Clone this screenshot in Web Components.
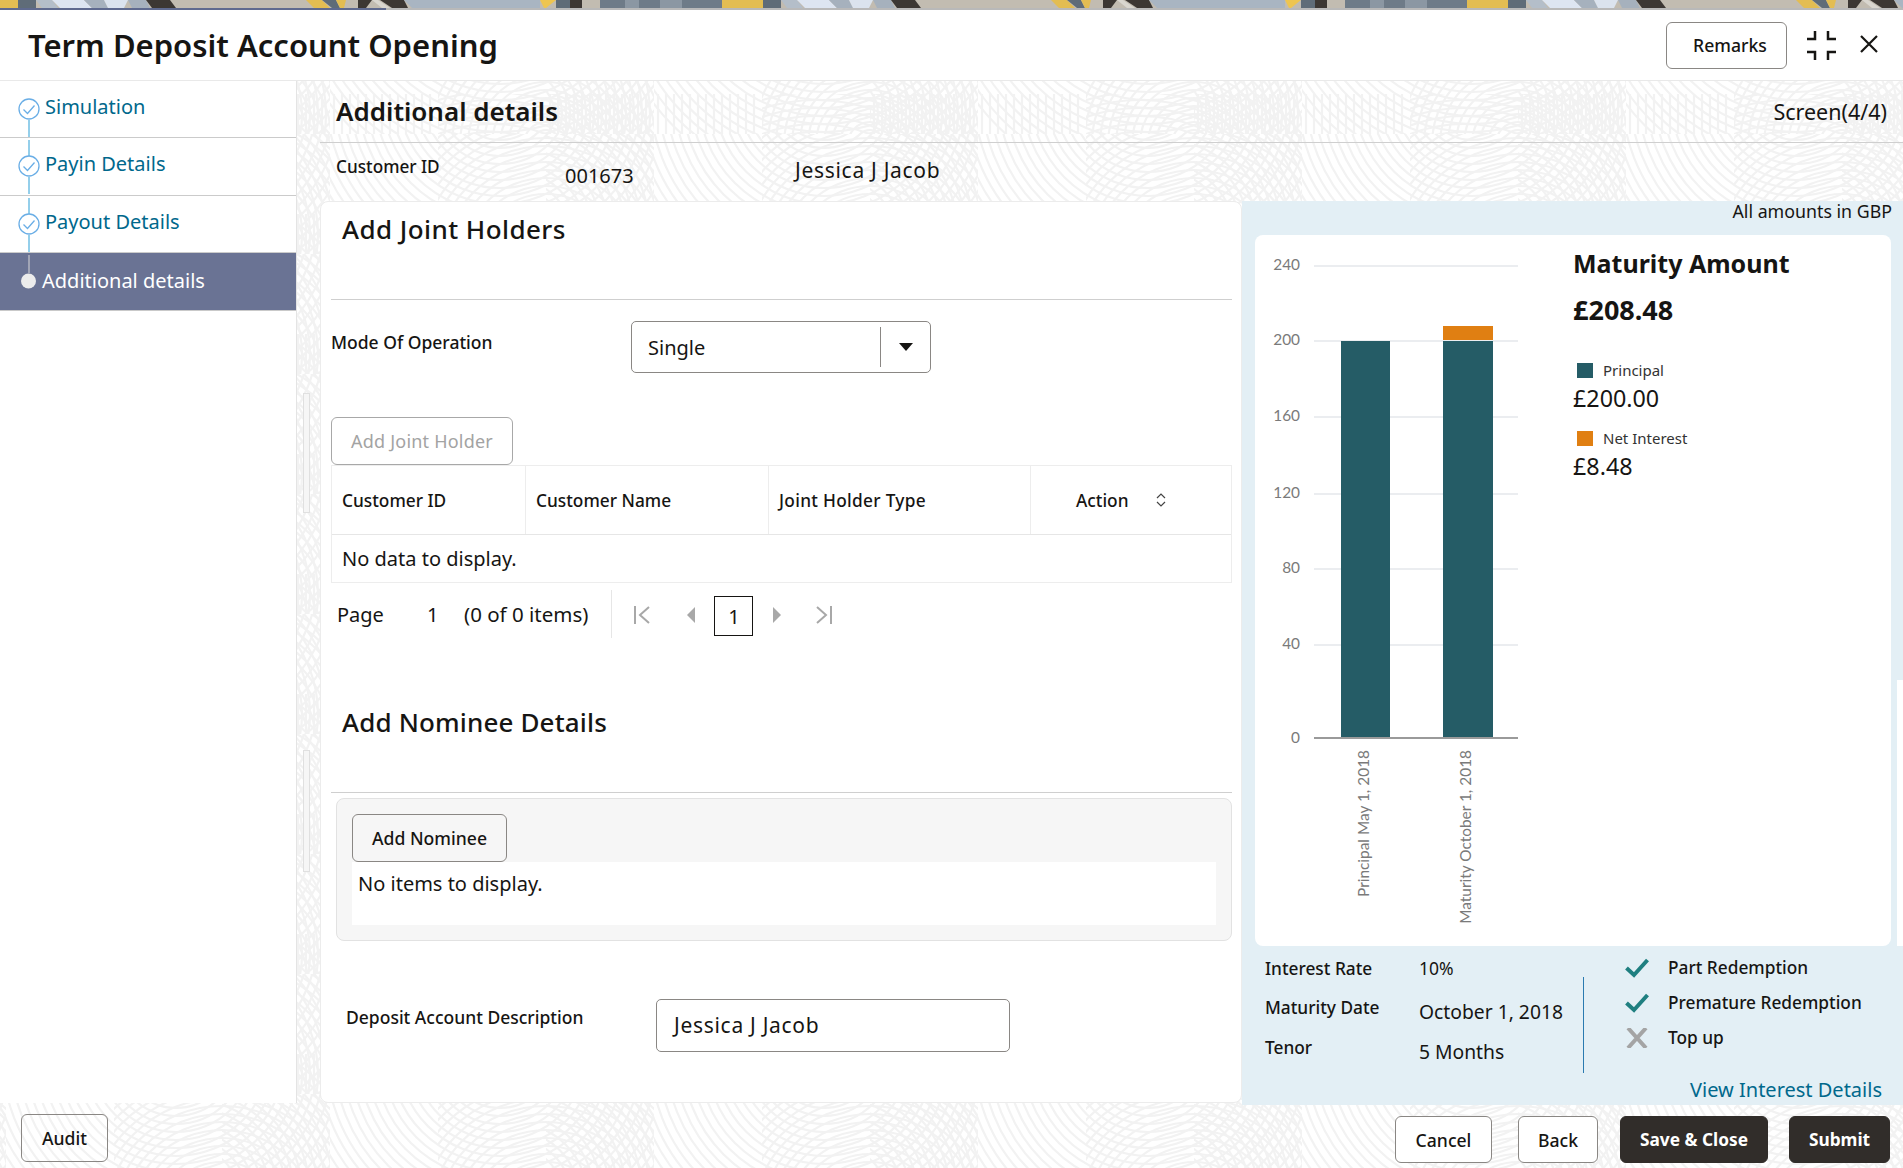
<!DOCTYPE html>
<html lang="en">
<head>
<meta charset="utf-8">
<title>Term Deposit Account Opening</title>
<style>
	html, body { margin: 0; padding: 0; background: #fff; }
	body { font-family: "Noto Sans", "Open Sans", sans-serif; color: #161513; }
</style>
</head>
<body>
<td-app></td-app>
<script>
(function() {
	function tpl(html) {
		let t = document.createElement("template");
		t.innerHTML = html;
		return t;
	}

	class Base extends HTMLElement {
		constructor(template) {
			super();
			this._shadowRoot = this.attachShadow({mode: "open"});
			this._shadowRoot.appendChild(template.content.cloneNode(true));
		}
	}

	// top image strip, drawn as skewed slabs
	const bannerTemplate = tpl(`
		<style>
		:host { display: block; height: 8px; overflow: hidden; background: #bdb7ac; }
		svg { display: block; }
		</style>
		<svg width="1903" height="8">
			<defs>
				<pattern id="tile" width="745" height="8" patternUnits="userSpaceOnUse">
					<rect width="745" height="8" fill="#c2bcb1"/>
					<rect x="0" width="18" height="8" fill="#e3bd52"/>
					<polygon points="18,0 36,0 36,8 18,8" fill="#5f6c78"/>
					<polygon points="36,0 52,0 58,8 42,8" fill="#b4bec9"/>
					<polygon points="52,0 84,0 92,8 60,8" fill="#dde5f1"/>
					<polygon points="84,0 104,0 108,8 92,8" fill="#a6b1bd"/>
					<polygon points="104,0 128,0 124,8 108,8" fill="#dbe3ee"/>
					<polygon points="128,0 146,0 150,8 132,8" fill="#a6b1bd"/>
					<polygon points="146,0 170,0 176,8 152,8" fill="#3c3733"/>
					<polygon points="306,0 322,0 330,8 314,8" fill="#e3bd52"/>
					<polygon points="322,0 336,0 340,8 332,8" fill="#5f6c78"/>
					<polygon points="336,0 346,0 344,8 340,8" fill="#e3bd52"/>
					<polygon points="358,0 372,0 366,8 358,8" fill="#3c3733"/>
					<polygon points="372,0 378,0 390,8 382,8" fill="#d9d6cf"/>
					<polygon points="380,0 404,0 408,8 392,8" fill="#3c3733"/>
					<polygon points="404,0 540,0 540,8 412,8" fill="#a9b5c2"/>
					<polygon points="540,0 556,0 546,8 544,8" fill="#eec550"/>
					<rect x="556" width="14" height="8" fill="#5f6c78"/>
					<rect x="570" width="12" height="8" fill="#3c3733"/>
					<rect x="600" width="125" height="8" fill="#6e7b88"/>
					<rect x="625" width="14" height="8" fill="#8b97a3"/>
					<rect x="660" width="22" height="8" fill="#8b97a3"/>
					<rect x="722" width="23" height="8" fill="#e3bd52"/>
				</pattern>
			</defs>
			<rect width="1903" height="8" fill="url(#tile)"/>
		</svg>
	`);
	class BannerStrip extends Base { constructor() { super(bannerTemplate); } }
	customElements.define("banner-strip", BannerStrip);

	// faint fingerprint texture behind the page: blocks of arcs and stripes
	const swirlTemplate = tpl(`
		<style>
		:host { position: absolute; inset: 0; display: block; overflow: hidden; }
		svg { display: block; width: 100%; height: 100%; }
		</style>
		<svg id="s">
			<defs>
				<pattern id="p" width="324" height="120" patternUnits="userSpaceOnUse" patternTransform="translate(6 14)">
					<g id="g" fill="none" stroke="#f2f2f2" stroke-width="2.200"></g>
				</pattern>
			</defs>
			<rect width="100%" height="100%" fill="url(#p)"/>
		</svg>
	`);
	class SwirlBg extends Base {
		arcs(x, y, w, h, cx, cy) {
			let d = `<svg x="${x}" y="${y}" width="${w}" height="${h}">`;
			for (let r = 14; r < 220; r += 8) {
				d += `<circle cx="${cx}" cy="${cy}" r="${r}"/>`;
			}
			return d + "</svg>";
		}
		stripes(x, y, w, h) {
			let d = `<svg x="${x}" y="${y}" width="${w}" height="${h}">`;
			for (let i = 4; i < w; i += 8) {
				d += `<path d="M${i} 0V${h}"/>`;
			}
			return d + "</svg>";
		}
		constructor() {
			super(swirlTemplate);
			let d = "";
			d += this.arcs(0, 0, 108, 80, 170, -40);
			d += this.arcs(108, 0, 108, 80, 108, 130);
			d += this.arcs(216, 0, 108, 80, -30, 100);
			d += this.stripes(0, 80, 108, 40);
			d += this.arcs(108, 80, 108, 40, 54, 180);
			d += this.stripes(216, 80, 108, 40);
			this._shadowRoot.getElementById("g").innerHTML = d;
		}
	}
	customElements.define("swirl-bg", SwirlBg);

	const buttonTemplate = tpl(`
		<style>
		:host { display: inline-flex; align-items: center; justify-content: center; box-sizing: border-box;
			height: 48px; padding: 0 10px; border: 1px solid #8a8784; border-radius: 6px; background: #fff;
			font: 500 17.600px "Noto Sans", sans-serif; color: #161513; white-space: nowrap; }
		:host([kind=primary]) { background: #312d2a; border-color: #312d2a; color: #fff; font-weight: 700; font-size: 17.300px; }
		:host([kind=disabled]) { color: #a3a3a3; border-color: #a8a8a8; font-weight: 400; font-size: 18px; letter-spacing: .2px; }
		:host([kind=plain]) { background: transparent; }
		</style>
		<slot></slot>
	`);
	class TdButton extends Base { constructor() { super(buttonTemplate); } }
	customElements.define("td-button", TdButton);

	const headerTemplate = tpl(`
		<style>
		:host { display: block; background: #fff; }
		.progress { display: flex; height: 2px; background: #b9b9b9; }
		.progress i { display: block; width: 386px; background: #5f6a8f; }
		.bar { display: flex; align-items: center; height: 71px; box-sizing: border-box; padding: 0 25px 0 28px; border-bottom: 1px solid #e9e9e9; }
		h1 { margin: 0; flex: 1; font: 600 31px "Noto Sans", sans-serif; color: #161513; }
		td-button { width: 121px; height: 47px; margin-right: 20px; padding-left: 17px; }
		svg { display: block; }
		.close { margin-left: 24px; margin-top: -2px; }
		</style>
		<div class="progress"><i></i></div>
		<div class="bar">
			<h1><slot></slot></h1>
			<td-button>Remarks</td-button>
			<svg width="29" height="29" viewBox="0 0 29 29" fill="none" stroke="#161513" stroke-width="2.500"><path d="M8 0V8H0M21 0V8H29M8 29V21H0M21 29V21H29"/></svg>
			<svg class="close" width="18" height="18" viewBox="0 0 18 18" fill="none" stroke="#161513" stroke-width="2.200"><path d="M1 1L17 17M17 1L1 17"/></svg>
		</div>
	`);
	class DialogHeader extends Base { constructor() { super(headerTemplate); } }
	customElements.define("dialog-header", DialogHeader);

	const stepTemplate = tpl(`
		<style>
		:host { display: flex; box-sizing: border-box; height: 57px; border-bottom: 1px solid #cbcbcb; color: #00688c; background: #fff; font: 400 20px "Noto Sans", sans-serif; }
		:host([active]) { background: #6a7394; color: #fff; border-bottom-color: #c9c9c9; }
		svg { flex: none; display: block; }
		.t { line-height: 52px; white-space: nowrap; }
		:host([active]) .t { line-height: 56px; margin-left: -3px; }
		</style>
		<svg id="rail" width="45" height="56"></svg>
		<div class="t"><slot></slot></div>
	`);
	class TrainStep extends Base {
		connectedCallback() {
			let svg = this._shadowRoot.getElementById("rail");
			if (this.hasAttribute("active")) {
				svg.innerHTML = `<path d="M29 2V20" stroke="#d8d8d8"/><circle cx="28.500" cy="28" r="7.500" fill="#ececec"/>`;
			} else {
				let top = this.hasAttribute("first") ? "" : `<path d="M29 2V18" stroke="#2a9fd6"/>`;
				svg.innerHTML = top + `<path d="M29 39V56" stroke="#2a9fd6"/>
					<circle cx="29" cy="28" r="10" fill="#fff" stroke="#6aaee6" stroke-width="1.300"/>
					<path d="M23.500 28.500L27.500 32.500L34.500 24.500" fill="none" stroke="#6aaee6" stroke-width="1.300"/>`;
			}
		}
		constructor() { super(stepTemplate); }
	}
	customElements.define("train-step", TrainStep);

	const navTemplate = tpl(`
		<style>
		:host { display: block; background: #fff; border-right: 1px solid #e4e4e4; box-sizing: border-box; height: 1022px; }
		</style>
		<slot></slot>
	`);
	class TrainNav extends Base { constructor() { super(navTemplate); } }
	customElements.define("train-nav", TrainNav);

	const tableTemplate = tpl(`
		<style>
		:host { display: block; background: #fff; border: 1px solid #ededed; box-sizing: border-box; height: 118px; font-size: 17.300px; }
		.head { display: grid; grid-template-columns: 194px 243px 262px 1fr; height: 68px; border-bottom: 1px solid #e6e6e6; font-weight: 500; }
		.head div { display: flex; align-items: center; padding-left: 10px; border-right: 1px solid #ededed; }
		.head div:last-child { border-right: 0; padding-left: 45px; gap: 28px; }
		.j { letter-spacing: .3px; }
		.empty { padding: 10px 10px; font-size: 20px; line-height: 28px; }
		svg { display: block; }
		</style>
		<div class="head">
			<div>Customer ID</div>
			<div>Customer Name</div>
			<div class="j">Joint Holder Type</div>
			<div>Action <svg width="10" height="14" viewBox="0 0 10 14" fill="none" stroke="#444" stroke-width="1.200"><path d="M1 5L5 1L9 5M1 9L5 13L9 9"/></svg></div>
		</div>
		<div class="empty">No data to display.</div>
	`);
	class JointTable extends Base { constructor() { super(tableTemplate); } }
	customElements.define("joint-table", JointTable);

	const pagerTemplate = tpl(`
		<style>
		:host { display: flex; align-items: center; height: 48px; margin-top: 7px; font-size: 20px; color: #161513; }
		.page { margin-left: 6px; width: 90px; }
		.num { width: 37px; }
		.items { font-size: 20.500px; }
		.sep { width: 1px; height: 48px; background: #e6e6e6; margin: 0 21px 0 23px; }
		.box { box-sizing: border-box; width: 39px; height: 40px; border: 1.500px solid #161513; display: flex; align-items: center; justify-content: center; margin: 4px 20px 0 19px; }
		svg { display: block; margin-top: 2px; }
		</style>
		<span class="page">Page</span><span class="num">1</span><span class="items">(0 of 0 items)</span>
		<span class="sep"></span>
		<svg width="18" height="18" viewBox="0 0 18 18" fill="none" stroke="#a8a8a8" stroke-width="2"><path d="M2 0V18M16 1L7 9L16 17"/></svg>
		<svg style="margin-left:35px" width="9" height="16" viewBox="0 0 9 16"><path d="M9 0V16L1 8Z" fill="#a8a8a8"/></svg>
		<div class="box">1</div>
		<svg width="9" height="16" viewBox="0 0 9 16"><path d="M0 0V16L8 8Z" fill="#a8a8a8"/></svg>
		<svg style="margin-left:33px" width="18" height="18" viewBox="0 0 18 18" fill="none" stroke="#a8a8a8" stroke-width="2"><path d="M16 0V18M2 1L11 9L2 17"/></svg>
	`);
	class TablePager extends Base { constructor() { super(pagerTemplate); } }
	customElements.define("table-pager", TablePager);

	const cardTemplate = tpl(`
		<style>
		:host { display: block; box-sizing: border-box; height: 902px; background: #fff; border: 1px solid #ececec; border-radius: 8px; padding-left: 10px; padding-right: 9px; color: #161513; }
		h2 { margin: 0; padding-left: 11px; font: 500 26px/36px "Noto Sans", sans-serif; letter-spacing: .15px; }
		hr { border: 0; border-top: 1px solid #cfcfcf; margin: 0; }
		.h1 { padding-top: 9px; height: 97px; box-sizing: border-box; }
		.h1 h2 { letter-spacing: .43px; }
		.h2 { margin-top: 66px; height: 88px; }
		.mode { display: flex; height: 52px; margin-top: 21px; }
		.label { font-size: 17.500px; font-weight: 500; }
		.mode .label { width: 300px; line-height: 42px; }
		.select { display: flex; align-items: center; box-sizing: border-box; width: 300px; height: 52px; border: 1px solid #8a8784; border-radius: 5px; padding-left: 16px; font-size: 20px; }
		.select span { flex: 1; }
		.select i { width: 1px; height: 40px; background: #8a8784; margin-right: 18px; }
		.select svg { margin-right: 17px; display: block; }
		.add { margin-top: 44px; display: block; }
		.add td-button { width: 182px; }
		.panel { box-sizing: border-box; height: 143px; margin: 5px 0 0 5px; padding: 15px 15px 0; background: #f6f6f6; border: 1px solid #e2e2e2; border-radius: 8px; }
		.panel td-button { width: 155px; }
		.items { background: #fff; height: 63px; padding: 8px 6px; box-sizing: border-box; font-size: 20px; line-height: 28px; }
		.panel .row { height: 48px; }
		.desc { display: flex; margin: 58px 0 0 15px; }
		.desc .label { width: 310px; line-height: 36px; }
		.input { box-sizing: border-box; width: 354px; height: 53px; line-height: 51px; border: 1px solid #8a8784; border-radius: 5px; padding-left: 17px; font-size: 21px; letter-spacing: .7px; }
		</style>
		<div class="h1"><h2>Add Joint Holders</h2></div>
		<hr>
		<div class="mode">
			<div class="label">Mode Of Operation</div>
			<div class="select"><span>Single</span><i></i><svg width="14" height="8" viewBox="0 0 14 8"><path d="M0 0H14L7 8Z" fill="#161513"/></svg></div>
		</div>
		<div class="add"><td-button kind="disabled">Add Joint Holder</td-button></div>
		<joint-table></joint-table>
		<table-pager></table-pager>
		<div class="h2"><h2>Add Nominee Details</h2></div>
		<hr>
		<div class="panel">
			<div class="row"><td-button kind="plain">Add Nominee</td-button></div>
			<div class="items">No items to display.</div>
		</div>
		<div class="desc">
			<div class="label">Deposit Account Description</div>
			<div class="input">Jessica J Jacob</div>
		</div>
	`);
	class HoldersCard extends Base { constructor() { super(cardTemplate); } }
	customElements.define("holders-card", HoldersCard);

	// chart coordinates are relative to the white card
	const chartTemplate = tpl(`
		<style>
		:host { display: flex; box-sizing: border-box; height: 711px; background: #fff; border-radius: 8px; color: #161513; }
		svg.c { display: block; flex: none; }
		text { font: 400 15.400px "Lato", "Noto Sans", sans-serif; fill: #7a7a7a; }
		.info { padding: 10px 0 0 18px; }
		.t { font: 700 25px/36px "Noto Sans", sans-serif; }
		.a { font: 700 27px/36px "Noto Sans", sans-serif; margin-top: 11px; }
		.lg { display: flex; align-items: center; font-size: 15px; line-height: 21px; color: #333; margin: 0 0 0 4px; }
		.lg i { width: 16px; height: 15px; margin-right: 10px; }
		.v { font-size: 23.300px; line-height: 34px; margin-bottom: 13px; }
		.l1 { margin-top: 32px; }
		</style>
		<svg class="c" width="300" height="711">
			<g stroke="#ebedf0" stroke-width="2">
				<path d="M59 31H263M59 106H263M59 182H263M59 259H263M59 334H263M59 410H263"/>
			</g>
			<rect x="86" y="106" width="49" height="397" fill="#255c66"/>
			<rect x="188" y="106" width="50" height="397" fill="#255c66"/>
			<rect x="188" y="91" width="50" height="14" fill="#e07f12"/>
			<path d="M59 503H263" stroke="#9a9a9a" stroke-width="2"/>
			<g text-anchor="end">
				<text x="45" y="35">240</text>
				<text x="45" y="110">200</text>
				<text x="45" y="186">160</text>
				<text x="45" y="263">120</text>
				<text x="45" y="338">80</text>
				<text x="45" y="414">40</text>
				<text x="45" y="508">0</text>
				<text transform="translate(114 515) rotate(-90)">Principal May 1, 2018</text>
				<text transform="translate(216 515) rotate(-90)">Maturity October 1, 2018</text>
			</g>
		</svg>
		<div class="info">
			<div class="t">Maturity Amount</div>
			<div class="a">£208.48</div>
			<div class="lg l1"><i style="background:#255c66"></i>Principal</div>
			<div class="v">£200.00</div>
			<div class="lg"><i style="background:#e07f12"></i>Net Interest</div>
			<div class="v">£8.48</div>
		</div>
	`);
	class MaturityChart extends Base { constructor() { super(chartTemplate); } }
	customElements.define("maturity-chart", MaturityChart);

	const factsTemplate = tpl(`
		<style>
		:host { display: flex; font-size: 17.300px; color: #161513; height: 128px; }
		.left { display: grid; grid-template-columns: 154px auto; grid-template-rows: 39px 40px 39px; width: 328px; padding: 5px 0 0 10px; box-sizing: border-box; }
		.l { font-weight: 500; line-height: 36px; }
		.v { font-size: 19.300px; line-height: 44px; white-space: nowrap; }
		.v.s { font-size: 17.500px; line-height: 34px; }
		.div { width: 1px; background: #2a7ab0; height: 96px; margin-top: 31px; }
		.right { padding: 4px 0 0 41px; }
		.r { display: flex; align-items: center; height: 35px; font-weight: 500; gap: 19px; white-space: nowrap; }
		svg { display: block; }
		</style>
		<div class="left">
			<div class="l">Interest Rate</div><div class="v s">10%</div>
			<div class="l">Maturity Date</div><div class="v">October 1, 2018</div>
			<div class="l">Tenor</div><div class="v">5 Months</div>
		</div>
		<div class="div"></div>
		<div class="right">
			<div class="r"><svg width="24" height="20" viewBox="0 0 24 20" fill="none" stroke="#1f7f80" stroke-width="4"><path d="M1.500 10L9 17L22.500 2"/></svg>Part Redemption</div>
			<div class="r"><svg width="24" height="20" viewBox="0 0 24 20" fill="none" stroke="#1f7f80" stroke-width="4"><path d="M1.500 10L9 17L22.500 2"/></svg>Premature Redemption</div>
			<div class="r"><svg width="24" height="20" viewBox="0 0 24 20" fill="none" stroke="#a4a4a4" stroke-width="4"><path d="M3 0L21 20M21 0L3 20"/></svg>Top up</div>
		</div>
	`);
	class DepositFacts extends Base { constructor() { super(factsTemplate); } }
	customElements.define("deposit-facts", DepositFacts);

	const summaryTemplate = tpl(`
		<style>
		:host { display: block; position: relative; box-sizing: border-box; height: 904px; background: #e3eff5; padding: 0 12px 0 13px; }
		.cur { text-align: right; height: 34px; font-size: 17.800px; line-height: 20px; margin-right: -1px; color: #161513; }
		.link { text-align: right; color: #00688c; font-size: 20px; line-height: 28px; margin: 2px 9px 0 0; }
		.edge { position: absolute; right: 0; top: 479px; width: 6px; height: 266px; background: #fff; }
		</style>
		<div class="cur">All amounts in GBP</div>
		<maturity-chart></maturity-chart>
		<deposit-facts></deposit-facts>
		<div class="link">View Interest Details</div>
		<div class="edge"></div>
	`);
	class SummaryPanel extends Base { constructor() { super(summaryTemplate); } }
	customElements.define("summary-panel", SummaryPanel);

	const mainTemplate = tpl(`
		<style>
		:host { display: block; position: relative; font-family: "Noto Sans", sans-serif; color: #161513; }
		.head { display: flex; align-items: center; justify-content: space-between; height: 62px; box-sizing: border-box; margin-left: 23px; padding: 0 16px 2px; border-bottom: 1px solid #cfcfcf; }
		.head b { font: 600 26px "Noto Sans", sans-serif; }
		.head span { font-size: 21.500px; margin-top: 2px; }
		.cust { display: flex; height: 58px; margin-left: 23px; padding-left: 16px; box-sizing: border-box; }
		.cust .k { width: 229px; font-size: 17.200px; font-weight: 500; line-height: 48px; }
		.cust .id { width: 230px; font-size: 20px; line-height: 66px; }
		.cust .nm { font-size: 21px; letter-spacing: .7px; line-height: 54px; }
		.cols { display: grid; grid-template-columns: 922px 1fr; margin-left: 23px; }
		.grip { position: absolute; left: 6px; width: 7px; box-sizing: border-box; border: 1px solid #e0e0e0; background: #f6f6f6; }
		</style>
		<div class="head"><b>Additional details</b><span>Screen(4/4)</span></div>
		<div class="cust">
			<div class="k">Customer ID</div>
			<div class="id">001673</div>
			<div class="nm">Jessica J Jacob</div>
		</div>
		<div class="cols">
			<holders-card></holders-card>
			<summary-panel></summary-panel>
		</div>
		<div class="grip" style="top:312px;height:120px"></div>
		<div class="grip" style="top:669px;height:122px"></div>
	`);
	class MainPane extends Base { constructor() { super(mainTemplate); } }
	customElements.define("main-pane", MainPane);

	const appTemplate = tpl(`
		<style>
		:host { display: block; position: relative; width: 1903px; height: 1168px; overflow: hidden; background: #fff; }
		.layer { position: relative; display: flex; flex-direction: column; height: 100%; }
		.mid { display: grid; grid-template-columns: 297px 1fr; height: 1024px; }
		.foot { display: flex; align-items: center; gap: 26px; flex: 1; padding: 6px 13px 0 21px; }
		.foot .sp { flex: 1; }
		.foot td-button { height: 47px; }
		.foot .save { margin-left: -4px; }
		.foot .sub { margin-left: -5px; }
		.foot .audit { height: 48px; margin-top: -4px; }
		</style>
		<swirl-bg></swirl-bg>
		<div class="layer">
			<banner-strip></banner-strip>
			<dialog-header>Term Deposit Account Opening</dialog-header>
			<div class="mid">
				<train-nav>
					<train-step first>Simulation</train-step>
					<train-step style="height:58px">Payin Details</train-step>
					<train-step>Payout Details</train-step>
					<train-step active style="height:58px">Additional details</train-step>
				</train-nav>
				<main-pane></main-pane>
			</div>
			<div class="foot">
				<td-button kind="plain" class="audit" style="width:87px">Audit</td-button>
				<span class="sp"></span>
				<td-button style="width:97px">Cancel</td-button>
				<td-button style="width:80px">Back</td-button>
				<td-button kind="primary" class="save" style="width:148px">Save &amp; Close</td-button>
				<td-button kind="primary" class="sub" style="width:101px">Submit</td-button>
			</div>
		</div>
	`);
	class TdApp extends Base { constructor() { super(appTemplate); } }
	customElements.define("td-app", TdApp);
})();
</script>
</body>
</html>
